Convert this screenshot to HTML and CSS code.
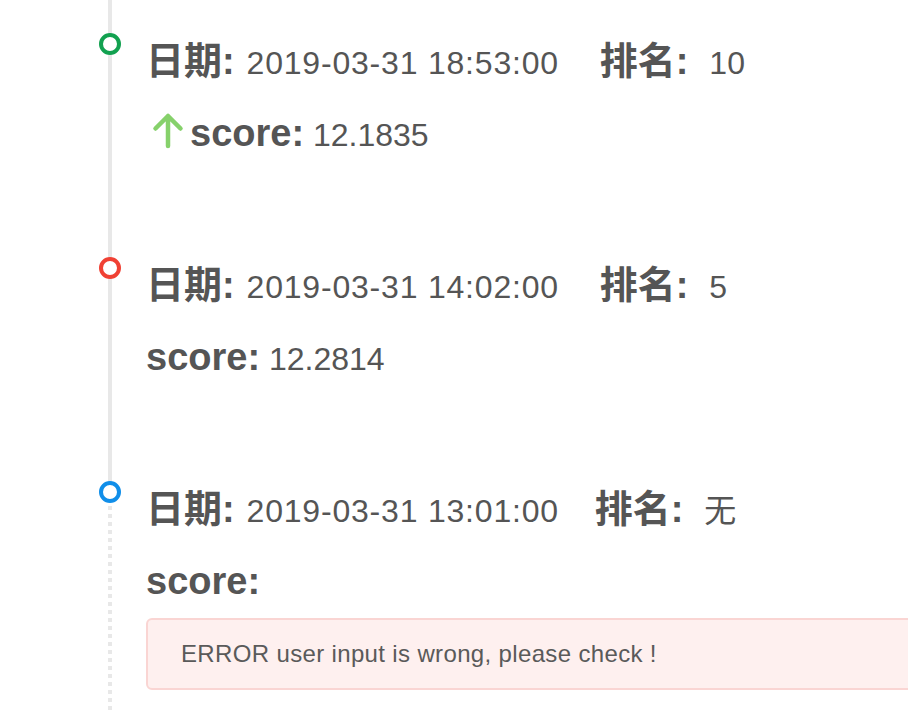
FILE: index.html
```html
<!DOCTYPE html>
<html lang="zh-CN">
<head>
<meta charset="utf-8">
<title>Timeline</title>
<link rel="stylesheet" href="styles.css">
</head>
<body>
<ul class="timeline">
  <li class="item">
    <span class="dot dot-green"></span>
    <div class="row">
      <span class="label">日期:</span> <span class="value date">2019-03-31 18:53:00</span>
      <span class="group"><span class="label">排名:</span> <span class="value rank">10</span></span>
    </div>
    <div class="row">
      <svg class="arrow" width="43" height="38" viewBox="0 0 43 38" aria-hidden="true"><path d="M21 35V5M8.5 17.5L21 5L33.5 17.5" fill="none" stroke="#86d16b" stroke-width="4.5" stroke-linecap="round" stroke-linejoin="round"/></svg><span class="label">score:</span> <span class="value">12.1835</span>
    </div>
  </li>
  <li class="item">
    <span class="dot dot-red"></span>
    <div class="row">
      <span class="label">日期:</span> <span class="value date">2019-03-31 14:02:00</span>
      <span class="group"><span class="label">排名:</span> <span class="value rank">5</span></span>
    </div>
    <div class="row">
      <span class="label">score:</span> <span class="value">12.2814</span>
    </div>
  </li>
  <li class="item item-pending">
    <span class="dot dot-blue"></span>
    <div class="row">
      <span class="label">日期:</span> <span class="value date">2019-03-31 13:01:00</span>
      <span class="group group-narrow"><span class="label">排名:</span> <span class="value rank">无</span></span>
    </div>
    <div class="row">
      <span class="label">score:</span>
    </div>
    <div class="alert">ERROR user input is wrong, please check !</div>
  </li>
</ul>
</body>
</html>
```

FILE: styles.css
```css
html, body {
  margin: 0;
  padding: 0;
  background: #fff;
  overflow: hidden;
}

body {
  font-family: "Liberation Sans", "Noto Sans CJK SC", sans-serif;
  color: #555;
}

.timeline {
  list-style: none;
  margin: 0;
  padding: 0 0 0 99px;
}

.item {
  position: relative;
  padding: 25px 0 55px 47px;
}

.item::before {
  content: "";
  position: absolute;
  left: 9px;
  top: 0;
  bottom: 0;
  width: 4px;
  background: #e8e8e8;
}

.item-pending {
  padding-bottom: 24px;
}

.item-pending::before {
  bottom: auto;
  height: 40px;
}

.item-pending::after {
  content: "";
  position: absolute;
  left: 9px;
  top: 58px;
  bottom: 0;
  width: 4px;
  background: repeating-linear-gradient(to bottom, #e8e8e8 0 4px, transparent 4px 8px);
}

.dot {
  position: absolute;
  left: 0;
  top: 33px;
  width: 14px;
  height: 14px;
  border: 4px solid;
  border-radius: 50%;
  background: #fff;
  z-index: 1;
}

.dot-green { border-color: #12a150; }
.dot-red { border-color: #f04134; }
.dot-blue { border-color: #108ee9; }

.row {
  height: 72px;
  line-height: 72px;
  font-size: 32px;
  white-space: nowrap;
}

.label {
  font-size: 38px;
  font-weight: bold;
}

.value {
  font-size: 32px;
}

.date {
  margin-left: 3px;
  letter-spacing: 0.8px;
}

.rank {
  margin-left: 12px;
}

.group {
  margin-left: 32px;
}

.group-narrow {
  margin-left: 27px;
}

.arrow {
  vertical-align: -3px;
  margin-left: 1px;
}

.alert {
  box-sizing: border-box;
  width: 800px;
  margin-top: 1px;
  padding: 18px 33px;
  line-height: 32px;
  font-size: 24px;
  letter-spacing: 0.35px;
  color: #5a5a5a;
  background: #fef0ef;
  border: 2px solid #fad5d3;
  border-radius: 6px;
}
```
